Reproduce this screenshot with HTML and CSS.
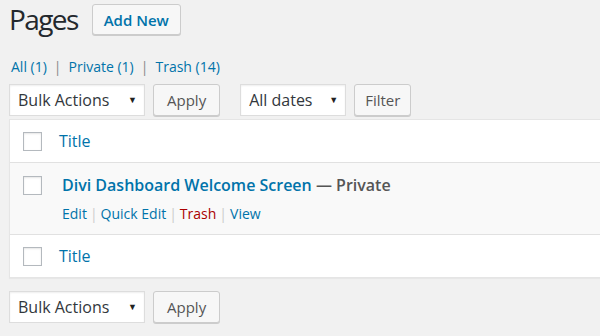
FILE: index.html
```html
<!DOCTYPE html>
<html>
<head>
<meta charset="utf-8">
<link rel="stylesheet" href="styles.css">
</head>
<body>
<div class="wrap">
  <div class="heading">
    <h1 class="title">Pages</h1>
    <a class="btn add-new">Add New</a>
  </div>
  <ul class="subsubsub">
    <li><a>All <span class="count">(1)</span></a><span class="sep">|</span></li>
    <li><a>Private <span class="count">(1)</span></a><span class="sep">|</span></li>
    <li><a>Trash <span class="count">(14)</span></a></li>
  </ul>
  <div class="tablenav top">
    <div class="select bulk"><span>Bulk Actions</span><span class="arrow">▼</span></div>
    <a class="btn">Apply</a>
    <div class="select dates"><span>All dates</span><span class="arrow">▼</span></div>
    <a class="btn filter">Filter</a>
  </div>
  <div class="table">
    <div class="row head">
      <span class="cb"></span>
      <a class="col-title">Title</a>
    </div>
    <div class="row item">
      <span class="cb"></span>
      <div class="cell">
        <div class="row-title"><a>Divi Dashboard Welcome Screen</a> <span class="state">— Private</span></div>
        <div class="row-actions">
          <a>Edit</a><span class="bar">|</span><a>Quick Edit</a><span class="bar">|</span><a class="danger">Trash</a><span class="bar">|</span><a>View</a>
        </div>
      </div>
    </div>
    <div class="row foot">
      <span class="cb"></span>
      <a class="col-title">Title</a>
    </div>
  </div>
  <div class="tablenav bottom">
    <div class="select bulk"><span>Bulk Actions</span><span class="arrow">▼</span></div>
    <a class="btn">Apply</a>
  </div>
</div>
</body>
</html>
```
FILE: styles.css
```css
* { box-sizing: border-box; }
html, body { margin: 0; padding: 0; }
body {
  background: #f1f1f1;
  font-family: "Open Sans", "Noto Sans", sans-serif;
  color: #444;
  width: 600px;
  height: 336px;
  overflow: hidden;
}
a { color: #0073aa; text-decoration: none; }
.wrap { padding: 4px 0 0 9px; }
.heading { display: flex; align-items: flex-start; gap: 14px; height: 31px; }
.title {
  margin: 0;
  font-weight: 400;
  font-size: 28px;
  line-height: 36px;
  color: #23282d;
  margin-top: -3px;
  letter-spacing: -1.6px;
}
.btn {
  display: inline-flex;
  align-items: center;
  justify-content: center;
  height: 32px;
  padding: 0 13px;
  background: #f7f7f7;
  border: 1px solid #cccccc;
  border-radius: 3px;
  box-shadow: 0 1px 0 #cccccc;
  color: #555;
  font-size: 15px;
}
.add-new {
  height: 31px;
  color: #0073aa;
  font-weight: 600;
  font-size: 15px;
  padding: 0 11px;
}
.filter { padding: 0 10px; }
.subsubsub {
  list-style: none;
  margin: 22px 0 0 2px;
  padding: 0;
  display: flex;
  font-size: 14px;
  line-height: 20px;
  color: #666;
}
.subsubsub .sep { color: #888; margin: 0 7px; }
.tablenav { display: flex; align-items: center; gap: 8px; margin-top: 6px; height: 33px; }
.select {
  height: 32px;
  background: #fff;
  border: 1px solid #dddddd;
  box-shadow: inset 0 1px 2px rgba(0,0,0,.07);
  display: flex;
  align-items: center;
  justify-content: space-between;
  padding: 0 7px 0 8px;
  font-size: 16px;
  color: #32373c;
}
.select .arrow { font-size: 9px; color: #222; }
.bulk { width: 136px; }
.dates { width: 106px; margin-left: 12px; }
.table {
  margin-top: 3px;
  background: #fff;
  border: 1px solid #e5e5e5;
  border-right: none;
  box-shadow: 0 1px 1px rgba(0,0,0,.04);
  width: 592px;
}
.row { display: flex; align-items: flex-start; padding-left: 13px; }
.cb {
  flex: none;
  width: 19px;
  height: 19px;
  border: 1px solid #b4b9be;
  background: #fff;
  box-shadow: inset 0 1px 2px rgba(0,0,0,.1);
}
.head, .foot { height: 43px; align-items: center; }
.head { border-bottom: 1px solid #e1e1e1; }
.foot { border-top: 1px solid #e1e1e1; }
.col-title { margin-left: 17px; font-size: 16px; margin-top: -1px; }
.item { background: #f9f9f9; height: 71px; padding-top: 13px; }
.cell { margin-left: 20px; margin-top: -3px; }
.row-title { font-size: 16px; font-weight: 600; line-height: 24px; }
.row-title .state { color: #555; }
.row-actions { font-size: 14px; line-height: 20px; margin-top: 7px; }
.row-actions .bar { color: #ccc; margin: 0 3px; }
.row-actions .danger { color: #a00; }
.tablenav.bottom { margin-top: 12px; }
```
